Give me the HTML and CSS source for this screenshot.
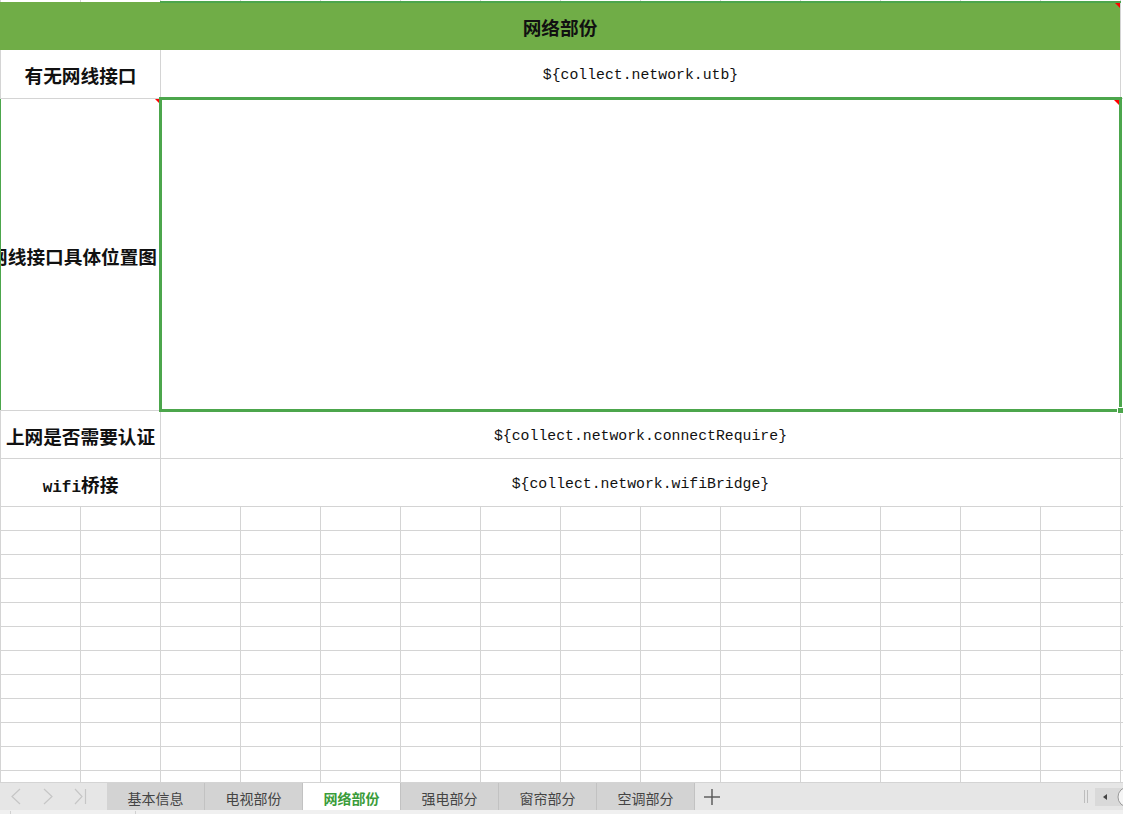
FILE: index.html
```html
<!DOCTYPE html>
<html lang="zh">
<head>
<meta charset="utf-8">
<title>网络部份</title>
<link rel="stylesheet" href="styles.css">
</head>
<body>
<div class="sheet">
  <div class="toprow"></div>
  <div class="row header">
    <div class="cell header-cell note">网络部份</div>
    <div class="cell edge"></div>
  </div>
  <div class="row r48">
    <div class="cell label">有无网线接口</div>
    <div class="cell value">${collect.network.utb}</div>
    <div class="cell edge"></div>
  </div>
  <div class="row r312 lined">
    <div class="cell label label-clip note"><span class="txt">网线接口具体位置图</span></div>
    <div class="cell value"></div>
    <div class="cell edge"></div>
  </div>
  <div class="row r48 lined">
    <div class="cell label">上网是否需要认证</div>
    <div class="cell value">${collect.network.connectRequire}</div>
    <div class="cell edge"></div>
  </div>
  <div class="row r48 lined">
    <div class="cell label"><span class="txt"><span class="latin">wifi</span>桥接</span></div>
    <div class="cell value">${collect.network.wifiBridge}</div>
    <div class="cell edge"></div>
  </div>
  <div class="empty-grid"></div>
  <div class="selection"><span class="handle"></span></div>
</div>

<div class="tabbar">
  <div class="nav">
    <svg width="107" height="27" viewBox="0 0 107 27">
      <polyline points="20,6 12,13.5 20,21" fill="none" stroke="#c6c6c6" stroke-width="1.2"/>
      <polyline points="44,6 52,13.5 44,21" fill="none" stroke="#c6c6c6" stroke-width="1.2"/>
      <polyline points="75,6 82,13.5 75,21" fill="none" stroke="#c6c6c6" stroke-width="1.2"/>
      <line x1="85.5" y1="6" x2="85.5" y2="21" stroke="#c6c6c6" stroke-width="1.2"/>
    </svg>
  </div>
  <div class="tab">基本信息</div>
  <div class="tab">电视部份</div>
  <div class="tab active">网络部份</div>
  <div class="tab">强电部分</div>
  <div class="tab">窗帘部分</div>
  <div class="tab">空调部分</div>
  <div class="add">
    <svg width="18" height="18" viewBox="0 0 18 18">
      <line x1="9" y1="1" x2="9" y2="17" stroke="#555" stroke-width="1.4"/>
      <line x1="1" y1="9" x2="17" y2="9" stroke="#555" stroke-width="1.4"/>
    </svg>
  </div>
  <div class="spacer"></div>
  <div class="splitter"><span></span><span></span></div>
  <div class="scrollbox">
    <svg width="28" height="18" viewBox="0 0 28 18">
      <polygon points="12,6 8,9 12,12" fill="#444"/>
      <circle cx="33" cy="9" r="10" fill="#f5f5f5" stroke="#9a9a9a" stroke-width="1"/>
    </svg>
  </div>
</div>
<div class="hscroll"><span class="mark m1"></span><span class="mark m2"></span></div>
</body>
</html>
```

FILE: styles.css
```css
html, body {
  margin: 0;
  padding: 0;
}

body {
  width: 1123px;
  height: 814px;
  overflow: hidden;
  background: #ffffff;
  font-family: "Noto Sans CJK SC", sans-serif;
  color: #000;
}

.sheet {
  position: relative;
  width: 1123px;
  height: 783px;
}

.toprow {
  height: 2px;
  background-image: linear-gradient(to right, #d4d4d4 1px, transparent 1px);
  background-size: 80px 2px;
}

.row {
  display: flex;
}

.header { height: 48px; position: relative; }
.r48 { height: 48px; }
.r312 { height: 312px; }

.lined {
  border-top: 1px solid #d4d4d4;
  box-sizing: border-box;
}

.cell {
  box-sizing: border-box;
  border-left: 1px solid #d4d4d4;
  display: flex;
  align-items: center;
  justify-content: center;
  white-space: nowrap;
  position: relative;
}

.header-cell {
  width: 1120px;
  border-left: none;
  background: #70ad47;
  font-weight: 700;
  font-size: 18.67px;
  color: #111;
}

.header::before {
  content: "";
  position: absolute;
  left: 160px;
  right: 2px;
  top: -1px;
  height: 2px;
  background: #4ca64c;
  z-index: 2;
}

.edge {
  width: 3px;
  flex: none;
}

.label {
  width: 160px;
  flex: none;
  font-weight: 700;
  font-size: 18.67px;
  color: #111;
  padding-top: 1px;
}

.txt {
  white-space: nowrap;
}

.latin {
  font-family: "Liberation Mono", monospace;
  font-size: 16px;
  font-weight: 700;
}

.label-clip {
  justify-content: flex-end;
  padding-right: 3px;
  overflow: hidden;
  border-left: 1px solid #4ca64c;
}

.value {
  width: 960px;
  flex: none;
  font-family: "Liberation Mono", monospace;
  font-size: 14.8px;
  color: #111;
  padding-top: 2px;
}

.note::after {
  content: "";
  position: absolute;
  top: 0;
  right: 0;
  border-left: 5px solid transparent;
  border-top: 5px solid #ff0000;
}

.header-cell.note::after {
  top: 1px;
}

.empty-grid {
  height: 277px;
  box-sizing: border-box;
  border-bottom: 1px solid #d4d4d4;
  background-image:
    linear-gradient(to right, #d4d4d4 1px, transparent 1px),
    linear-gradient(to bottom, #d4d4d4 1px, transparent 1px);
  background-size: 80px 24px;
}

.selection {
  position: absolute;
  left: 159px;
  top: 97px;
  width: 963px;
  height: 315px;
  box-sizing: border-box;
  border: 3px solid #4ca64c;
}

.selection::after {
  content: "";
  position: absolute;
  top: 0;
  right: 0;
  border-left: 5px solid transparent;
  border-top: 5px solid #ff0000;
}

.handle {
  position: absolute;
  right: -5px;
  bottom: -5px;
  width: 5px;
  height: 5px;
  background: #4ca64c;
  border: 1px solid #fff;
}

.tabbar {
  display: flex;
  height: 27px;
  background: #e6e6e6;
}

.nav {
  width: 107px;
  flex: none;
  display: flex;
}

.tab {
  width: 98px;
  flex: none;
  box-sizing: border-box;
  border-right: 1px solid #c2c2c2;
  background: #d3d3d3;
  display: flex;
  align-items: center;
  justify-content: center;
  font-size: 14px;
  color: #444;
  padding-top: 2px;
}

.tab.active {
  background: #ffffff;
  color: #3a9c3a;
  font-weight: 700;
}

.add {
  width: 34px;
  flex: none;
  display: flex;
  align-items: center;
  justify-content: center;
}

.spacer { flex: 1; }

.splitter {
  display: flex;
  align-items: center;
  gap: 2px;
  padding-right: 7px;
}

.splitter span {
  width: 1px;
  height: 13px;
  background: #bdbdbd;
}

.scrollbox {
  width: 28px;
  height: 18px;
  align-self: center;
  background: #d9d9d9;
  overflow: hidden;
  display: flex;
}

.hscroll {
  position: relative;
  height: 4px;
  background: #f0f0f0;
}

.mark {
  position: absolute;
  top: 1px;
  width: 1px;
  height: 3px;
  background: #d0d0d0;
}
.m1 { left: 10px; }
.m2 { left: 135px; }
```
